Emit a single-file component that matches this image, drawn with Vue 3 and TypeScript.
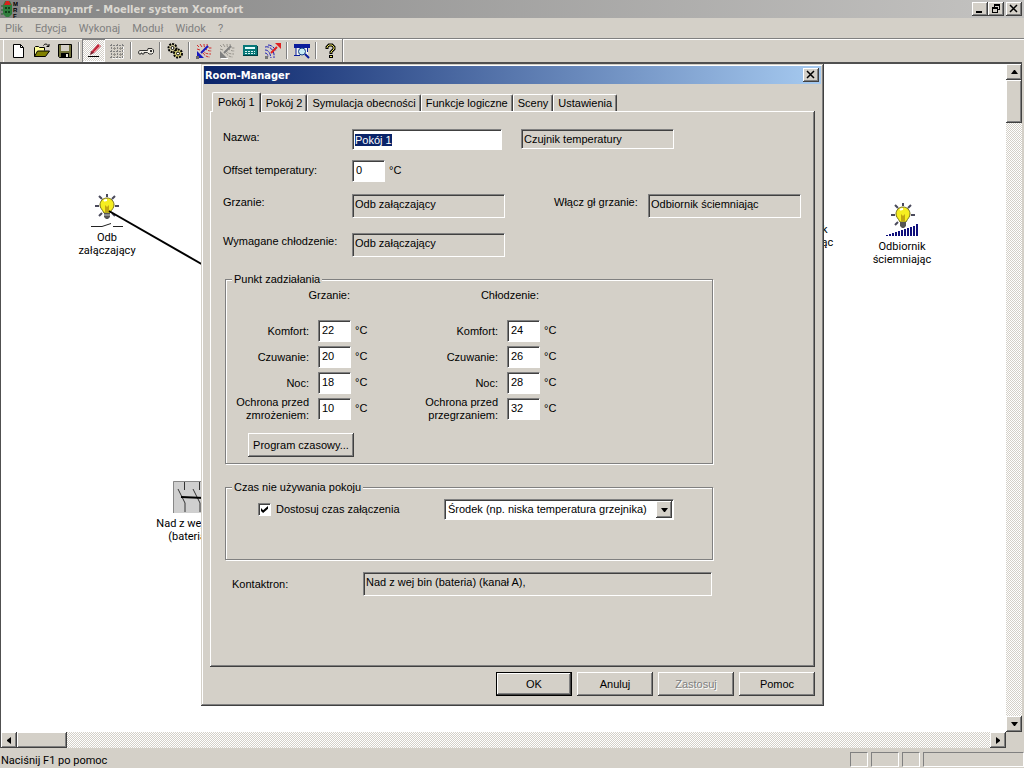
<script setup lang="ts">
import { onMounted, ref } from 'vue'

interface Setpoint { id: string; lines: string[]; value: string }
interface SetpointGroup { title: string; rows: Setpoint[] }

const menus: string[] = ['Plik', 'Edycja', 'Wykonaj', 'Moduł', 'Widok', '?']
const tabs: string[] = ['Pokój 1', 'Pokój 2', 'Symulacja obecności', 'Funkcje logiczne', 'Sceny', 'Ustawienia']
const activeTab = ref(0)

const roomName = ref('Pokój 1')
const offset = ref('0')
const adjustTime = ref(true)
const timeMode = ref('Środek (np. niska temperatura grzejnika)')
const nameInput = ref<HTMLInputElement | null>(null)

const groups = ref<SetpointGroup[]>([
  {
    title: 'Grzanie:',
    rows: [
      { id: 'h1', lines: ['Komfort:'], value: '22' },
      { id: 'h2', lines: ['Czuwanie:'], value: '20' },
      { id: 'h3', lines: ['Noc:'], value: '18' },
      { id: 'h4', lines: ['Ochrona przed', 'zmrożeniem:'], value: '10' },
    ],
  },
  {
    title: 'Chłodzenie:',
    rows: [
      { id: 'c1', lines: ['Komfort:'], value: '24' },
      { id: 'c2', lines: ['Czuwanie:'], value: '26' },
      { id: 'c3', lines: ['Noc:'], value: '28' },
      { id: 'c4', lines: ['Ochrona przed', 'przegrzaniem:'], value: '32' },
    ],
  },
])

onMounted(() => {
  nameInput.value?.focus()
  nameInput.value?.select()
})
</script>

<template>
  <div class="app">
    <header class="titlebar">
      <svg class="app-icon" width="18" height="18" viewBox="0 0 18 18" aria-hidden="true">
        <path d="M3 5 5 1h5l2 4v9l-3 3H6l-3-3z" fill="#2f7d3c" />
        <path d="M4 5 6 1h3l2 4z" fill="#d8201c" />
        <path d="M5 7h2v2H5zM8 7h2v2H8zM5 11h2v2H5zM8 11h2v2H8z" fill="#123f1a" />
        <path d="M1 6h2M1 10h2M1 14h2" stroke="#1c5a28" />
        <text x="13" y="6" class="app-letters">M</text>
        <text x="13" y="12" class="app-letters">R</text>
        <text x="13" y="18" class="app-letters">F</text>
      </svg>
      <h1>nieznany.mrf - Moeller system Xcomfort</h1>
      <div class="window-buttons">
        <button type="button" class="cap" aria-label="Minimalizuj">
          <svg width="10" height="10" viewBox="0 0 10 10"><path d="M1 7h6v2H1z" /></svg>
        </button>
        <button type="button" class="cap" aria-label="Przywróć">
          <svg width="10" height="10" viewBox="0 0 10 10"><path d="M3 0h6v6H7V5h1V2H4v1H3zM1 3h6v6H1zM2 5v3h4V5z" fill-rule="evenodd" /></svg>
        </button>
        <button type="button" class="cap close" aria-label="Zamknij">
          <svg width="10" height="10" viewBox="0 0 10 10"><path d="M1 1l7 7M8 1L1 8" stroke="#000" stroke-width="1.500" /></svg>
        </button>
      </div>
    </header>

    <nav class="menubar">
      <button v-for="m in menus" :key="m" type="button">{{ m }}</button>
    </nav>

    <div class="toolbar" role="toolbar">
      <button type="button" class="tool" aria-label="Nowy">
        <svg viewBox="0 0 16 16"><path d="M2.500 1.500h7l3 3v10h-10z" fill="#fff" stroke="#000" /><path d="M9.500 1.500v3h3" fill="none" stroke="#000" /></svg>
      </button>
      <button type="button" class="tool" aria-label="Otwórz">
        <svg viewBox="0 0 16 16">
          <path d="M.5 13.500v-9l1-1h3l1 1h5v3" fill="#ffff9a" stroke="#000" />
          <path d="M.5 13.500l3-5.500h12l-4 5.500z" fill="#808000" stroke="#000" />
          <path d="M9.500 2.500c1-2 4-2 5 1M12.500 3.500h2.500v-2.500" fill="none" stroke="#000" />
        </svg>
      </button>
      <button type="button" class="tool" aria-label="Zapisz">
        <svg viewBox="0 0 16 16">
          <path d="M1.500 1.500h13v13h-12l-1-1z" fill="#70703a" stroke="#000" />
          <path d="M4 2h8v6H4z" fill="#d4d0c8" /><path d="M4 10h8v5H4z" fill="#000" /><path d="M9 11h2v3H9z" fill="#e8e4dc" />
        </svg>
      </button>
      <span class="sep" />
      <button type="button" class="tool pressed" aria-label="Edytuj">
        <svg viewBox="0 0 16 16">
          <path d="M12 1l3 2-7 7-3-1z" fill="#c0283c" /><path d="M13 2l1 1-6 6" fill="none" stroke="#f08a90" />
          <path d="M5 8l3 2-4 2z" fill="#7a2030" /><path d="M2 13.500h11" stroke="#000" />
        </svg>
      </button>
      <button type="button" class="tool" aria-label="Siatka">
        <svg viewBox="0 0 16 16">
          <path d="M1 2.500h14M1 8.500h14M1 14.500h14M2.500 1v14M8.500 1v14M13.500 1v14" stroke="#808080" stroke-dasharray="2 1" />
          <path d="M4 5.500h3M10 5.500h3M4 11.500h3M10 11.500h3M5.500 4v3M5.500 10v3M11.500 4v3M11.500 10v3" stroke="#96938c" />
          <path d="M3.500 15.500h11M14.500 4v11" stroke="#fff" stroke-dasharray="2 1" />
        </svg>
      </button>
      <span class="sep" />
      <button type="button" class="tool" aria-label="Klucz">
        <svg viewBox="0 0 16 16">
          <path d="M10 5.500h4l1.500 1.500v2.500l-1.500 1.500h-3l-1.500-1.500H6v1.500H4v-1h-1v1H1l-.5-2 1-1.500h8z" fill="#f2efe6" stroke="#333" />
          <path d="M12 7h2v2h-2z" fill="#333" />
        </svg>
      </button>
      <span class="sep" />
      <button type="button" class="tool" aria-label="Ustawienia systemu">
        <svg viewBox="0 0 16 16">
          <circle cx="5.500" cy="5" r="4" fill="#d8d0a0" stroke="#000" stroke-width="2" stroke-dasharray="2 1" />
          <circle cx="5.500" cy="5" r="1.500" fill="#fff" stroke="#000" />
          <circle cx="11" cy="10.500" r="4" fill="#e0d878" stroke="#000" stroke-width="2" stroke-dasharray="2 1" />
          <circle cx="11" cy="10.500" r="1.500" fill="#fff" stroke="#000" />
        </svg>
      </button>
      <span class="sep" />
      <button type="button" class="tool" aria-label="Wczytaj">
        <svg viewBox="0 0 16 16">
          <path d="M1 2l2 2M4 1l2 3M1 6l3 1" stroke="#d02828" />
          <path d="M8 1c0 3 1 5 3 6s3 1 5 1M11 1c0 2 1 3 2 4h3M7 7c1 3 3 4 8 4M7 10c2 3 4 4 7 4" fill="none" stroke="#d02828" stroke-dasharray="3 1" />
          <path d="M12 3L5 10" stroke="#1818c0" stroke-width="2" /><path d="M1 8v7h7z" fill="#1818c0" /><path d="M0 13h3v3H0z" fill="#666" />
        </svg>
      </button>
      <button type="button" class="tool" aria-label="Wczytaj wszystko">
        <svg viewBox="0 0 16 16">
          <path d="M1 2l2 2M4 1l2 3M1 6l3 1" stroke="#96938c" />
          <path d="M8 1c0 3 1 5 3 6s3 1 5 1M11 1c0 2 1 3 2 4h3M7 7c1 3 3 4 8 4M7 10c2 3 4 4 7 4" fill="none" stroke="#96938c" stroke-dasharray="3 1" />
          <path d="M12 3L5 10" stroke="#808080" stroke-width="2" /><path d="M1 8v7h7z" fill="#808080" /><path d="M2 15.500h7" stroke="#fff" />
        </svg>
      </button>
      <button type="button" class="tool" aria-label="Sterownik">
        <svg viewBox="0 0 16 16">
          <path d="M1 2h14v11H1z" fill="#087878" /><path d="M1 13h15V3h-1v9H1z" fill="#003c40" /><path d="M3 4h10v2H3z" fill="#e4ffff" />
          <path d="M3 8.500h10M3 10.500h10" stroke="#d8f4f4" stroke-dasharray="2 1" />
        </svg>
      </button>
      <button type="button" class="tool" aria-label="Wyślij">
        <svg viewBox="0 0 16 16">
          <path d="M0 4c3-1 8 1 9 7v4M0 7c3 0 5 2 6 8M0 10c2 0 3 2 3 4M3 2c3 0 6 2 8 6" fill="none" stroke="#2020b8" stroke-dasharray="4 1" />
          <path d="M6 10l6-6" stroke="#e02020" stroke-width="2" /><path d="M10 0h6v6z" fill="#e02020" /><path d="M0 13h3v3H0z" fill="#777" />
        </svg>
      </button>
      <span class="sep" />
      <button type="button" class="tool" aria-label="Podgląd">
        <svg viewBox="0 0 16 16">
          <path d="M0 1h16v4H0z" fill="#0a1c9c" /><path d="M2 5h12v7H2z" fill="#f4f4f0" /><path d="M2 5v7M13.500 5v4M0 12.500h6" stroke="#0a1c9c" />
          <circle cx="8" cy="8.500" r="3.500" fill="#c8ecf4" stroke="#123c80" /><path d="M11 11l4 4" stroke="#0a1c9c" stroke-width="2" />
        </svg>
      </button>
      <span class="sep" />
      <button type="button" class="tool" aria-label="Pomoc">
        <svg viewBox="0 0 16 16">
          <path d="M4 6V4l2-2h3l2 2v2L8 9v2" fill="none" stroke="#000" stroke-width="3" />
          <path d="M4 5V4l2-2h3l2 2v2L8 9v1" fill="none" stroke="#ece45c" />
          <path d="M6 12h4v3H6z" /><path d="M7 13h2v1H7z" fill="#ece45c" />
        </svg>
      </button>
      <span class="toolbar-end" />
    </div>

    <main class="workspace">
      <div class="canvas">
        <figure class="node relay">
          <svg width="32" height="36" viewBox="0 0 32 36" aria-hidden="true">
            <path d="M16 1v3M8 3l3 3M24 3l-3 3M4 13h4M24 13h4M8 23l3-3M24 23l-3-3" stroke="#4a4a5c" stroke-width="2" />
            <path d="M16 5c-4 0-7 3-7 7 0 3 2 4 4 8h6c2-4 4-5 4-8 0-4-3-7-7-7z" fill="#f6ee20" stroke="#77701c" />
            <path d="M13 8c1-1 2-1 3-1" stroke="#fff" stroke-width="2" fill="none" /><path d="M14 12l2 2 2-2v7h-4z" fill="#c2a712" />
            <path d="M13 20h6v4l-2 2h-2l-2-2z" fill="#555" /><path d="M13 22h6" stroke="#ccc" />
            <path d="M0 33.500h11l9-3M22 33.500h10" fill="none" stroke="#222" />
          </svg>
          <figcaption>Odb<br />załączający</figcaption>
        </figure>
        <figure class="node switch">
          <svg width="32" height="32" viewBox="0 0 32 32" aria-hidden="true">
            <path d="M0 0h32v32H0z" fill="#cfcfcf" /><path d="M.5 32V.5H32" fill="none" stroke="#888" />
            <path d="M11.500 1v8M26.500 1v8M5 8l7 14v9M20 8l7 14v9" fill="none" stroke="#333" /><path d="M8 16l23 1" stroke="#000" stroke-width="2" />
          </svg>
          <figcaption>Nad z wej bin<br />(bateria)</figcaption>
        </figure>
        <figure v-for="place in ['covered', 'right']" :key="place" class="node" :class="place">
          <svg width="34" height="36" viewBox="0 0 34 36" aria-hidden="true">
            <path d="M18 1v3M10 3l3 3M26 3l-3 3M6 13h4M26 13h4M10 23l3-3" stroke="#4a4a5c" stroke-width="2" />
            <path d="M18 5c-4 0-7 3-7 7 0 3 2 4 4 8h6c2-4 4-5 4-8 0-4-3-7-7-7z" fill="#f6ee20" stroke="#77701c" />
            <path d="M15 8c1-1 2-1 3-1" stroke="#fff" stroke-width="2" fill="none" /><path d="M16 12l2 2 2-2v7h-4z" fill="#c2a712" />
            <path d="M15 20h6v4l-2 2h-2l-2-2z" fill="#555" />
            <path d="M1 33h2v1H1zM4 32h2v2H4zM7 31h2v3H7zM10 30h2v4h-2zM13 29h2v5h-2zM16 28h2v6h-2zM19 27h2v7h-2zM22 26h2v8h-2zM25 25h2v9h-2zM28 24h2v10h-2zM31 22h2v12h-2z" fill="#10107c" />
          </svg>
          <figcaption>Odbiornik<br />ściemniając</figcaption>
        </figure>
        <svg class="wires" width="100%" height="100%" aria-hidden="true">
          <path d="M108 147L204 202" stroke="#000" stroke-width="2" />
        </svg>
      </div>

      <div class="scroll vertical">
        <button type="button" class="arrow" aria-label="W górę"><svg width="7" height="4" viewBox="0 0 7 4"><path d="M3 0h1l3 4H0z" /></svg></button>
        <div class="thumb" />
        <div class="track" />
        <button type="button" class="arrow" aria-label="W dół"><svg width="7" height="4" viewBox="0 0 7 4"><path d="M0 0h7L4 4H3z" /></svg></button>
      </div>
      <div class="scroll horizontal">
        <button type="button" class="arrow" aria-label="W lewo"><svg width="4" height="7" viewBox="0 0 4 7"><path d="M4 0v7L0 4V3z" /></svg></button>
        <div class="thumb" />
        <div class="track" />
        <button type="button" class="arrow" aria-label="W prawo"><svg width="4" height="7" viewBox="0 0 4 7"><path d="M0 0v7l4-3V3z" /></svg></button>
      </div>
      <div class="corner" />
    </main>

    <footer class="statusbar">
      <span class="hint">Naciśnij F1 po pomoc</span>
      <span class="cell small" /><span class="cell medium" /><span class="cell small" /><span class="cell large" />
    </footer>

    <div class="modal-layer">
      <section class="dialog" role="dialog" aria-labelledby="dialog-title">
        <header class="dialog-title">
          <h2 id="dialog-title">Room-Manager</h2>
          <button type="button" class="cap" aria-label="Zamknij okno">
            <svg width="10" height="10" viewBox="0 0 10 10"><path d="M1 1l7 7M8 1L1 8" stroke="#000" stroke-width="1.500" /></svg>
          </button>
        </header>

        <div class="dialog-body">
          <div class="tabs" role="tablist">
            <button
              v-for="(t, i) in tabs" :key="t" type="button" role="tab" class="tab"
              :class="{ active: i === activeTab }" :aria-selected="i === activeTab" @click="activeTab = i"
            >{{ t }}</button>
          </div>

          <form class="panel" @submit.prevent>
            <div class="row name-row">
              <label class="caption" for="name">Nazwa:</label>
              <input id="name" ref="nameInput" v-model="roomName" class="field name" spellcheck="false" />
              <input class="field static short" value="Czujnik temperatury" aria-label="Czujnik" readonly />
            </div>
            <div class="row offset-row">
              <label class="caption" for="offset">Offset temperatury:</label>
              <input id="offset" v-model="offset" class="field number" />
              <span class="unit">°C</span>
            </div>
            <div class="row">
              <label class="caption" for="heat">Grzanie:</label>
              <input id="heat" class="field static" value="Odb załączający" readonly />
              <label class="caption second" for="main-heat">Włącz gł grzanie:</label>
              <input id="main-heat" class="field static" value="Odbiornik ściemniając" readonly />
            </div>
            <div class="row">
              <label class="caption" for="cool">Wymagane chłodzenie:</label>
              <input id="cool" class="field static" value="Odb załączający" readonly />
            </div>

            <fieldset class="setpoints">
              <legend>Punkt zadziałania</legend>
              <div class="groups">
                <div v-for="g in groups" :key="g.title" class="group">
                  <h3>{{ g.title }}</h3>
                  <div v-for="r in g.rows" :key="r.id" class="setpoint">
                    <label :for="r.id"><span v-for="l in r.lines" :key="l">{{ l }}</span></label>
                    <input :id="r.id" v-model="r.value" class="field number" />
                    <span class="unit">°C</span>
                  </div>
                </div>
              </div>
              <button type="button" class="push schedule">Program czasowy...</button>
            </fieldset>

            <fieldset class="idle">
              <legend>Czas nie używania pokoju</legend>
              <div class="idle-row">
                <input id="adjust" v-model="adjustTime" type="checkbox" />
                <label for="adjust">Dostosuj czas załączenia</label>
                <div class="combo">
                  <select v-model="timeMode" aria-label="Czas załączenia">
                    <option>Środek (np. niska temperatura grzejnika)</option>
                  </select>
                  <span class="drop"><svg width="7" height="4" viewBox="0 0 7 4"><path d="M0 0h7L4 4H3z" /></svg></span>
                </div>
              </div>
            </fieldset>

            <div class="row contact-row">
              <label class="caption" for="contact">Kontaktron:</label>
              <input id="contact" class="field static" value="Nad z wej bin (bateria) (kanał A)," readonly />
            </div>
          </form>

          <div class="actions">
            <button type="button" class="push default">OK</button>
            <button type="button" class="push">Anuluj</button>
            <button type="button" class="push" disabled>Zastosuj</button>
            <button type="button" class="push">Pomoc</button>
          </div>
        </div>
      </section>
    </div>
  </div>
</template>

<style>
html,
body {
  height: 100%;
  margin: 0;
  overflow: hidden;
}
</style>

<style scoped>
* {
  box-sizing: border-box;
}
.app {
  position: relative;
  display: flex;
  flex-direction: column;
  height: 100vh;
  background: #d4d0c8;
  color: #000;
  font: 11px/13px Roboto, "DejaVu Sans Condensed", sans-serif;
  cursor: default;
}
button,
input,
select {
  margin: 0;
  padding: 0;
  border: 0;
  border-radius: 0;
  background: none;
  color: inherit;
  font: inherit;
  outline: none;
}
h1,
h2,
h3,
figure {
  margin: 0;
  font: inherit;
}
.titlebar {
  display: flex;
  align-items: center;
  height: 18px;
  padding-right: 2px;
  background: linear-gradient(90deg, #848484, #c4c3c1);
  color: #dcd9d2;
}
.app-letters {
  font: bold 6px "Liberation Sans", sans-serif;
}
.titlebar h1,
.dialog-title h2 {
  flex: 1;
  font-family: "DejaVu Sans Condensed", "Noto Sans", sans-serif;
  font-size: 11px;
  font-weight: bold;
  white-space: nowrap;
}
.titlebar h1 {
  padding-left: 2px;
}
.window-buttons {
  display: flex;
}
.cap,
.arrow,
.thumb,
.drop {
  display: flex;
  align-items: center;
  justify-content: center;
  background: #d4d0c8;
  box-shadow: inset -1px -1px #404040, inset 1px 1px #fff, inset -2px -2px #808080;
}
.cap {
  width: 16px;
  height: 14px;
}
.cap.close {
  margin-left: 2px;
}
.menubar {
  display: flex;
  gap: 12px;
  height: 20px;
  padding-left: 5px;
  color: #808080;
}
.toolbar {
  display: flex;
  height: 24px;
  padding-left: 7px;
  border-top: 1px solid #808080;
  box-shadow: inset 0 1px #fff, inset 3px 0 #d4d0c8, inset 4px 0 #fff;
}
.tool {
  display: flex;
  align-items: center;
  justify-content: center;
  width: 23px;
}
.tool svg {
  width: 16px;
  height: 16px;
}
.pressed {
  background: repeating-conic-gradient(#fff 0 25%, #d4d0c8 0 50%) 0 0 / 2px 2px;
  box-shadow: inset 1px 1px #808080, inset -1px -1px #fff;
}
.sep {
  width: 6px;
  margin: 3px 0;
  background: linear-gradient(90deg, #808080 50%, #fff 50%) center / 2px 100% no-repeat;
}
.toolbar-end {
  width: 2px;
  border-left: 1px solid #808080;
  border-right: 1px solid #fff;
}
.workspace {
  flex: 1;
  display: grid;
  grid-template: minmax(0, 1fr) 16px / minmax(0, 1fr) 16px;
  margin-right: 2px;
  border-top: 2px solid #505050;
  border-left: 1px solid #505050;
}
.canvas {
  position: relative;
  overflow: hidden;
  background: #fff;
}
.wires {
  position: absolute;
  inset: 0;
}
.node {
  position: absolute;
  display: flex;
  flex-direction: column;
  align-items: center;
  width: 80px;
  text-align: center;
  white-space: nowrap;
}
.node figcaption {
  padding-top: 2px;
}
.relay { left: 66px; top: 129px; }
.switch { left: 148px; top: 417px; }
.switch figcaption { padding-top: 4px; }
.covered { left: 763px; top: 121px; }
.right { left: 861px; top: 138px; }
.scroll {
  display: flex;
  background: repeating-conic-gradient(#fff 0 25%, #d4d0c8 0 50%) 0 0 / 2px 2px;
}
.vertical {
  flex-direction: column;
}
.arrow {
  width: 16px;
  height: 16px;
}
.vertical .thumb {
  height: 43px;
}
.horizontal .thumb {
  width: 50px;
}
.track {
  flex: 1;
}
.statusbar {
  display: flex;
  gap: 3px;
  height: 20px;
  padding-top: 4px;
}
.hint {
  flex: 1;
  padding: 2px 0 0 1px;
}
.cell {
  height: 15px;
  border: 1px solid;
  border-color: #808080 #fff #fff #808080;
}
.small { width: 18px; }
.medium { width: 28px; }
.large { width: 101px; }

.modal-layer {
  position: absolute;
  inset: 0;
  display: flex;
  align-items: center;
  justify-content: center;
  padding: 2px 0 0 1px;
}
.dialog {
  width: 623px;
  max-width: 100%;
  padding: 2px 3px 3px;
  background: #d4d0c8;
  box-shadow: inset -1px -1px #404040, inset 1px 1px #d4d0c8, inset -2px -2px #808080, inset 2px 2px #fff;
  font: 11px/13px "Liberation Sans", Arial, sans-serif;
}
.dialog-title {
  display: flex;
  align-items: center;
  height: 18px;
  padding: 0 2px 0 1px;
  background: linear-gradient(90deg, #0a246a, #a6caf0);
  color: #fff;
}
.dialog-title .cap {
  color: #000;
}
.dialog-body {
  padding: 8px 6px 7px;
}
.tabs {
  display: flex;
  align-items: flex-end;
  height: 19px;
  padding-left: 2px;
}
.tab {
  height: 17px;
  padding: 0 4px;
  border-top: 1px solid #fff;
  border-left: 1px solid #fff;
  border-right: 1px solid #404040;
  border-radius: 2px 2px 0 0;
  box-shadow: inset -1px 0 #808080;
  white-space: nowrap;
}
.tab.active {
  position: relative;
  height: 20px;
  margin-bottom: -1px;
  padding: 0 5px 1px;
  background: #d4d0c8;
}
.panel {
  display: flex;
  flex-direction: column;
  min-height: 556px;
  padding: 18px 13px 12px;
  box-shadow: inset -1px -1px #404040, inset 1px 1px #fff, inset -2px -2px #808080;
}
.row {
  display: flex;
  align-items: flex-start;
  margin-bottom: 15px;
}
.caption {
  width: 129px;
  padding-top: 2px;
  white-space: nowrap;
}
.field {
  width: 153px;
  height: 24px;
  padding: 0 2px 4px;
  background: #fff;
  border: 1px solid;
  border-color: #808080 #fff #fff #808080;
  box-shadow: inset 1px 1px #404040;
}
.static {
  background: #d4d0c8;
}
.name {
  width: 150px;
  height: 21px;
  padding: 0 2px;
}
.name::selection {
  background: #0a246a;
  color: #fff;
}
.short {
  height: 20px;
  margin-left: 19px;
  padding: 0 2px;
}
.name-row {
  margin-bottom: 10px;
}
.offset-row {
  margin-bottom: 12px;
}
.offset-row .caption {
  padding-top: 4px;
}
.number {
  width: 33px;
  height: 22px;
  padding: 0 3px 2px;
}
.unit {
  padding: 4px 0 0 4px;
}
.second {
  width: 94px;
  margin-left: 49px;
}
fieldset {
  min-width: 0;
  width: 488px;
  margin: 1px 0 0 2px;
  padding: 0;
  border: 1px solid #808080;
  box-shadow: 1px 1px #fff, inset 1px 1px #fff;
}
legend {
  margin-left: 6px;
  padding: 0 2px;
  background: #d4d0c8;
}
.setpoints {
  height: 191px;
}
.groups {
  display: flex;
  padding-left: 12px;
}
.group {
  width: 189px;
}
.group h3 {
  width: 112px;
  margin: 3px 0 18px;
  text-align: right;
}
.setpoint {
  display: flex;
  align-items: flex-start;
  height: 26px;
}
.setpoint label {
  display: flex;
  flex-direction: column;
  align-items: flex-end;
  justify-content: center;
  width: 71px;
  height: 22px;
  margin-right: 9px;
  white-space: nowrap;
}
.push {
  min-width: 76px;
  height: 24px;
  background: #d4d0c8;
  box-shadow: inset -1px -1px #404040, inset 1px 1px #fff, inset -2px -2px #808080;
}
.push.default {
  box-shadow: inset 0 0 0 1px #000, inset -2px -2px #404040, inset 2px 2px #fff, inset -3px -3px #808080;
}
.push:disabled {
  color: #808080;
  text-shadow: 1px 1px #fff;
}
.schedule {
  display: block;
  width: 106px;
  margin: 9px 0 0 22px;
}
.idle {
  height: 79px;
  margin-top: 17px;
}
.idle-row {
  display: flex;
  align-items: center;
  padding: 5px 38px 0 32px;
}
.idle-row input {
  width: 13px;
  height: 13px;
  margin-right: 5px;
  appearance: none;
  background: #fff;
  border: 1px solid;
  border-color: #808080 #fff #fff #808080;
  box-shadow: inset 1px 1px #404040;
}
.idle-row input:checked::before {
  content: "";
  display: block;
  width: 7px;
  height: 7px;
  margin: 2px;
  background: #000;
  clip-path: polygon(0 30%, 30% 60%, 100% 0, 100% 40%, 30% 100%, 0 70%);
}
.combo {
  position: relative;
  width: 230px;
  margin-left: auto;
}
.combo select {
  display: block;
  width: 100%;
  height: 21px;
  padding: 0 20px 0 3px;
  appearance: none;
  background: #fff;
  border: 1px solid;
  border-color: #808080 #fff #fff #808080;
  box-shadow: inset 1px 1px #404040;
}
.drop {
  position: absolute;
  top: 2px;
  right: 2px;
  width: 16px;
  height: 17px;
  pointer-events: none;
}
.contact-row {
  margin: 12px 90px 0 9px;
}
.contact-row .caption {
  width: 131px;
  padding-top: 6px;
}
.contact-row .field {
  flex: 1;
}
.actions {
  display: flex;
  justify-content: flex-end;
  gap: 5px;
  padding-top: 5px;
}
</style>
